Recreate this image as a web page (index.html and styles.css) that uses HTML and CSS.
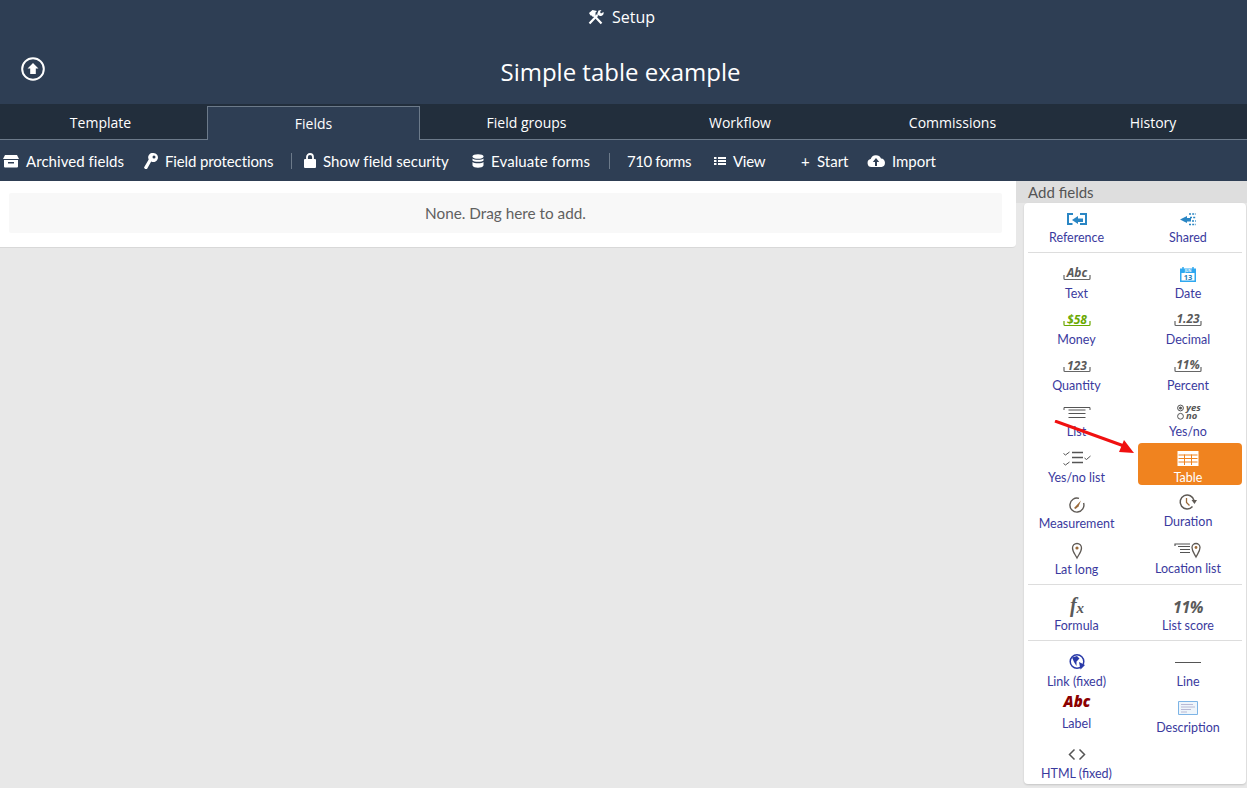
FILE: index.html
```html
<!DOCTYPE html>
<html lang="en">
<head>
<meta charset="utf-8">
<title>Setup</title>
<link rel="stylesheet" href="styles.css">
</head>
<body>
<header class="top">
  <div class="setup"><svg class="setup-ic" viewBox="0 0 16 16" width="16" height="16"><path d="M1.500 14.500 9.500 6M13.500 14.500 6 6.500" stroke="#fff" stroke-width="2.200" fill="none"/><path d="M1 4 4.500 1 9 2 7.500 3.500 7.500 6 5 8 3.500 6.500 2.500 6.500ZM10.500 1.500 13.500 1 12 3 13 4.500 15.500 3C16 5 15 7 12 7L9 5.500Z" fill="#fff"/></svg><span>Setup</span></div>
  <div class="title-row">
    <svg class="up" viewBox="0 0 24 24" width="24" height="24"><circle cx="12" cy="12" r="10.800" fill="none" stroke="#fff" stroke-width="2"/><path d="M12 6 17.500 11.500H14.800V17H9.200V11.500H6.500Z" fill="#fff"/></svg>
    <h1>Simple table example</h1>
  </div>
</header>
<nav class="tabs">
  <a class="tab t1">Template</a>
  <a class="tab active">Fields</a>
  <a class="tab t3">Field groups</a>
  <a class="tab t4">Workflow</a>
  <a class="tab t5">Commissions</a>
  <a class="tab t6">History</a>
</nav>
<div class="toolbar">
  <span class="tool w1"><svg viewBox="0 0 16 14" width="16" height="14"><path d="M2 1h12l2 4H0ZM1 6h14v6.500a1 1 0 0 1-1 1H2a1 1 0 0 1-1-1ZM5 8v1.500h6V8Z" fill="#fff" fill-rule="evenodd"/></svg>Archived fields</span>
  <span class="tool w2"><svg viewBox="0 0 14 16" width="14" height="16"><path d="M9.500 0a4.500 4.500 0 1 1-2.300 8.400L3 16H1L0 14.500 4.700 6.500A4.500 4.500 0 0 1 9.500 0Zm.5 2.500a1.500 1.500 0 1 0 0 3 1.500 1.500 0 0 0 0-3Z" fill="#fff" fill-rule="evenodd"/></svg>Field protections</span>
  <i class="sep"></i>
  <span class="tool w3"><svg viewBox="0 0 12 15" width="12" height="15"><path d="M1 6h10a1 1 0 0 1 1 1v7a1 1 0 0 1-1 1H1a1 1 0 0 1-1-1V7a1 1 0 0 1 1-1Z" fill="#fff"/><path d="M3 6.500V4a3 3 0 0 1 6 0v2.500" fill="none" stroke="#fff" stroke-width="1.800"/></svg>Show field security</span>
  <span class="tool w4"><svg viewBox="0 0 12 14" width="12" height="14"><ellipse cx="6" cy="2.500" rx="5.500" ry="2.300" fill="#fff"/><path d="M.5 4.500c1 1.800 10 1.800 11 0v2c-1 1.800-10 1.800-11 0ZM.5 8c1 1.800 10 1.800 11 0v3.500c-1 3-10 3-11 0Z" fill="#fff"/></svg>Evaluate forms</span>
  <i class="sep"></i>
  <span class="tool w5">710 forms</span>
  <span class="tool w6"><svg viewBox="0 0 12 10" width="12" height="10"><path d="M0 1h2.500v2H0ZM0 4h2.500v2H0ZM0 7h2.500v2H0ZM4 1h8v2H4ZM4 4h8v2H4ZM4 7h8v2H4Z" fill="#fff"/></svg>View</span>
  <span class="tool w7"><span class="plus">+</span>Start</span>
  <span class="tool w8"><svg viewBox="0 0 18 13" width="18" height="13"><path d="M4.500 13a4 4 0 0 1-.8-7.900A5.500 5.500 0 0 1 14 4.500 4.300 4.300 0 0 1 14.500 13Z" fill="#fff"/><path d="M9 4 5.800 8H8v4h2V8h2.200Z" fill="#2e3e54"/></svg>Import</span>
</div>
<main class="content">
  <section class="panel">
    <div class="drop">None. Drag here to add.</div>
  </section>
  <aside class="side">
    <div class="side-head">Add fields</div>
    <div class="card">
      <div class="sec">
        <div class="col">
          <div class="item"><svg viewBox="0 0 60 26" width="60" height="26"><path d="M26 11H21V21H25.500M33 11H39V21H33" fill="none" stroke="#2a86c4" stroke-width="2"/><path d="M25 17 31 13V15.500H36V19H31V21Z" fill="#2a86c4"/></svg><span>Reference</span></div>
        </div>
        <div class="col col2">
          <div class="item"><svg viewBox="0 0 60 26" width="60" height="26"><path d="M22 16.500 29 13V15H33V18.500H29V20Z" fill="#2a86c4"/><path d="M31 11h7M32 14.500h6M34 18h4M31 21.500h7" stroke="#2a86c4" stroke-width="1.500" stroke-dasharray="2 1.200"/></svg><span>Shared</span></div>
        </div>
      </div>
      <div class="sec">
        <div class="col">
          <div class="item"><svg viewBox="0 0 60 26" width="60" height="26"><use href="#bracket"/><text x="30" y="17.500" class="val">Abc</text></svg><span>Text</span></div>
          <div class="item"><svg viewBox="0 0 60 26" width="60" height="26"><use href="#bracket" class="green"/><text x="30" y="18.500" class="val money">$58</text></svg><span>Money</span></div>
          <div class="item"><svg viewBox="0 0 60 26" width="60" height="26"><use href="#bracket"/><text x="30" y="18.500" class="val">123</text></svg><span>Quantity</span></div>
          <div class="item"><svg viewBox="0 0 60 26" width="60" height="26"><path d="M17 13V10.500H43V13" fill="none" stroke="#555" stroke-width="1"/><path d="M21.500 13H38.500M21.500 16.500H38.500M21.500 20.500H38.500" stroke="#555" stroke-width="1.200"/></svg><span>List</span></div>
          <div class="item"><svg viewBox="0 0 60 26" width="60" height="26"><path d="M25 9.500H36M25 14.500H36M25 19.500H36" stroke="#555" stroke-width="1.700"/><path d="M16.500 10.500l2 1.500 4-3M16.500 20.500l2 1.500 4-3M37.500 15l2 1.500 4-3.500" fill="none" stroke="#555"/></svg><span>Yes/no list</span></div>
          <div class="item"><svg viewBox="0 0 60 26" width="60" height="26"><path d="M32 9.400A7 7 0 1 0 36.600 14" fill="none" stroke="#5f5a55" stroke-width="1.400"/><path d="M27 19 34 11.500 31.500 17.500 28.500 20Z" fill="#9a6a3a"/></svg><span>Measurement</span></div>
          <div class="item"><svg viewBox="0 0 60 26" width="60" height="26"><path d="M30 23c-2-3.800-4.500-6.500-4.500-10a4.500 4.500 0 0 1 9 0c0 3.500-2.500 6.200-4.500 10Z" fill="none" stroke="#5f5a55" stroke-width="1.300"/><circle cx="30" cy="13" r="1.600" fill="#9a6a3a"/></svg><span>Lat long</span></div>
        </div>
        <div class="col col2">
          <div class="item"><svg viewBox="0 0 60 26" width="60" height="26"><path d="M22 9.500H38V23H22Z" fill="#2fa8f0"/><path d="M25 8V11M35 8V11" stroke="#2fa8f0" stroke-width="1.500"/><path d="M23.500 14H36.500V21.500H23.500Z" fill="#fff"/><text x="30" y="13.300" class="mon">JUN</text><text x="30" y="21" class="cal">13</text></svg><span>Date</span></div>
          <div class="item"><svg viewBox="0 0 60 26" width="60" height="26"><use href="#bracket"/><text x="30" y="18" class="val">1.23</text></svg><span>Decimal</span></div>
          <div class="item"><svg viewBox="0 0 60 26" width="60" height="26"><use href="#bracket"/><text x="30" y="18" class="val">11%</text></svg><span>Percent</span></div>
          <div class="item"><svg viewBox="0 0 60 26" width="60" height="26"><circle cx="22.500" cy="11" r="2.900" fill="none" stroke="#555"/><circle cx="22.500" cy="11" r="1.500" fill="#555"/><circle cx="22.500" cy="19.300" r="2.900" fill="none" stroke="#555"/><text x="28" y="13.500" class="yn">yes</text><text x="28" y="22" class="yn">no</text></svg><span>Yes/no</span></div>
          <div class="item on mb2"><svg viewBox="0 0 60 26" width="60" height="26"><path d="M19.500 8H40.500V23H19.500Z" fill="#fff"/><path d="M20.500 12h19M20.500 15.500h19M20.500 19h19M26.500 11.500v10.500M33.500 11.500v10.500" stroke="#f0831f" stroke-width="1"/></svg><span>Table</span></div>
          <div class="item mb5"><svg viewBox="0 0 60 26" width="60" height="26"><path d="M34.500 19.500A7 7 0 1 1 36 13.500" fill="none" stroke="#5f5a55" stroke-width="1.500"/><path d="M33.500 13H39L36.500 17Z" fill="#5f5a55"/><path d="M28.500 11V15.500L31.500 18.500" fill="none" stroke="#9a6a3a" stroke-width="1.300"/></svg><span>Duration</span></div>
          <div class="item"><svg viewBox="0 0 60 26" width="60" height="26"><path d="M17 12V10H32M20 12.500H32M22 15.500H32M22 18.500H32" fill="none" stroke="#555" stroke-width="1.200"/><path d="M38 23c-2-3.800-4-6-4-9.500a4 4 0 0 1 8 0c0 3.500-2 5.700-4 9.500Z" fill="none" stroke="#5f5a55" stroke-width="1.300"/><circle cx="38" cy="13.500" r="1.400" fill="#9a6a3a"/></svg><span>Location list</span></div>
        </div>
      </div>
      <div class="sec">
        <div class="col">
          <div class="item"><svg viewBox="0 0 60 26" width="60" height="26"><text x="30" y="21" class="fx">f<tspan dy="1" class="fx-x">x</tspan></text></svg><span>Formula</span></div>
        </div>
        <div class="col col2">
          <div class="item"><svg viewBox="0 0 60 26" width="60" height="26"><text x="30" y="21.500" class="score">11%</text></svg><span>List score</span></div>
        </div>
      </div>
      <div class="sec last">
        <div class="col">
          <div class="item mb0"><svg viewBox="0 0 60 26" width="60" height="26"><circle cx="30" cy="14.500" r="6.800" fill="none" stroke="#2a3aa8" stroke-width="1.500"/><path d="M25 10.500 30 9 32.500 11.500 29.500 14.500 29.500 19 27 15ZM32 15 38 18 33.500 22.500Z" fill="#2a3aa8"/></svg><span>Link (fixed)</span></div>
          <div class="item mb8"><svg viewBox="0 0 60 26" width="60" height="26"><text x="30" y="18" class="lbl">Abc</text></svg><span>Label</span></div>
          <div class="item"><svg viewBox="0 0 60 26" width="60" height="26"><path d="M27.500 10.500 22.500 15.500 27.500 20.500M32.500 10.500 37.500 15.500 32.500 20.500" fill="none" stroke="#555" stroke-width="1.500"/></svg><span>HTML (fixed)</span></div>
        </div>
        <div class="col col2">
          <div class="item"><svg viewBox="0 0 60 26" width="60" height="26"><path d="M17 15.500H43" stroke="#555" stroke-width="1"/></svg><span>Line</span></div>
          <div class="item"><svg viewBox="0 0 60 26" width="60" height="26"><path d="M20.500 8.500H39.500V21.500H20.500Z" fill="#eef5fb" stroke="#7db4e6"/><path d="M23 11.500H35M23 14H37M23 16.500H33M23 19H29" stroke="#aac" stroke-width=".8"/></svg><span>Description</span></div>
        </div>
      </div>
    </div>
  </aside>
</main>
<svg class="arrow" viewBox="0 0 90 40" width="90" height="40"><path d="M1 1 70 26" stroke="#f01010" stroke-width="3"/><path d="M80 33 65 32 70 20Z" fill="#f01010"/></svg>
<svg class="defs" width="0" height="0"><defs><path id="bracket" d="M17 16V19.500a1 1 0 0 0 1 1H42a1 1 0 0 0 1-1V16" fill="none" stroke="currentColor" stroke-width="1.200"/></defs></svg>
</body>
</html>
```
FILE: styles.css
```css
* { box-sizing: border-box; }
html, body { height: 100%; }
body {
  margin: 0;
  width: 1247px;
  height: 788px;
  overflow: hidden;
  position: relative;
  display: flex;
  flex-direction: column;
  background: #e8e8e8;
  font-family: "Lato", "Open Sans", sans-serif;
}
.top { background: #2e3e54; height: 104px; color: #fff; font-family: "Open Sans", sans-serif; flex: none; }
.setup { height: 33px; display: flex; align-items: center; justify-content: center; gap: 8px; font-size: 16px; padding-right: 4px; padding-top: 1px; }
.title-row { position: relative; display: flex; justify-content: center; padding-top: 21px; padding-right: 6px; }
.up { position: absolute; left: 21px; top: 24px; }
h1 { margin: 0; font-size: 24px; font-weight: 400; line-height: 36px; }
.tabs { display: flex; height: 36px; flex: none; background: #222e3c; color: #fff; font-family: "Open Sans", sans-serif; font-size: 14px; border-bottom: 1px solid #6c7a8a; }
.tab { display: flex; align-items: center; justify-content: center; padding-top: 1px; }
.t1 { width: 207px; padding-right: 6px; }
.active { width: 213px; height: 36px; margin-top: 2px; background: #2e3e54; border: 1px solid #6c7a8a; border-bottom: none; padding: 0 0 2px; }
.t3 { width: 213px; }
.t4 { width: 213px; padding-left: 1px; }
.t5 { width: 213px; }
.t6 { width: 188px; }
.toolbar { height: 41px; flex: none; background: #2e3e54; color: #fff; display: flex; align-items: center; font-size: 15px; padding-left: 3px; }
.tool { display: flex; align-items: center; gap: 7px; white-space: nowrap; }
.w1 { width: 141px; letter-spacing: .05px; }
.w2 { width: 147px; letter-spacing: -.12px; }
.sep { width: 1px; height: 16px; background: #6c7a8a; margin-right: 12px; }
.w3 { width: 168px; letter-spacing: .05px; }
.w4 { width: 137px; letter-spacing: .12px; }
.w5 { width: 87px; margin-left: 5px; letter-spacing: -.4px; }
.w6 { width: 87px; letter-spacing: -.3px; }
.w7 { width: 66px; }
.w8 { letter-spacing: -.05px; }
.plus { width: 9px; }
.content { flex: 1; display: flex; align-items: flex-start; }
.panel { width: 1016px; height: 67px; background: #fff; border-radius: 0 0 4px 0; padding: 12px 14px 14px 9px; border-bottom: 1px solid #d8d8d8; }
.drop { height: 40px; background: #f8f8f8; display: flex; align-items: center; justify-content: center; color: #606060; font-size: 15.300px; border-radius: 2px; }
.side { width: 231px; height: 607px; display: flex; flex-direction: column; }
.side-head { height: 22px; background: #dedede; color: #555; font-size: 15px; padding-left: 12px; line-height: 22px; }
.card { margin-left: 8px; width: 222px; height: 581px; background: #fff; border-radius: 4px; box-shadow: 0 1px 2px rgba(0,0,0,.15); padding: 0 4px; }
.sec { display: grid; grid-template-columns: 97px 104px; column-gap: 13px; border-bottom: 1px solid #ddd; padding: 6px 0 3px; }
.sec:first-child { padding-top: 0; }
.sec.last { border: none; }
.col { display: flex; flex-direction: column; }
.item { height: 42px; margin-bottom: 4px; display: flex; flex-direction: column; align-items: center; color: #3a3a9e; font-size: 12.500px; line-height: 16px; border-radius: 4px; white-space: nowrap; }
.item span { margin-top: 1px; }
.col2 .item { padding-right: 4px; }
.item svg { flex: none; color: #666; }
.on { background: #f0831f; color: #fff; }
.mb0 { margin-bottom: 0; }
.mb2 { margin-bottom: 2px; }
.mb5 { margin-bottom: 5px; }
.mb8 { margin-bottom: 8px; }
.item svg use.green { color: #6aa800; }
.val { font: italic 700 12px "Open Sans", sans-serif; fill: #5a5a5a; text-anchor: middle; }
.val.money { fill: #6aa800; }
.cal { font: 700 7.500px "Open Sans", sans-serif; fill: #1f7dba; text-anchor: middle; }
.mon { font: 700 3.500px "Open Sans", sans-serif; fill: #fff; text-anchor: middle; }
.yn { font: italic 700 9.500px "Open Sans", sans-serif; fill: #555; }
.fx { font: italic 700 20px "Liberation Serif", serif; fill: #5a5a5a; text-anchor: middle; }
.fx-x { font-size: 15px; }
.score { font: italic 700 16px "Open Sans", sans-serif; fill: #5a5a5a; text-anchor: middle; letter-spacing: -.5px; }
.lbl { font: italic 800 15px "Open Sans", sans-serif; fill: #8b0000; text-anchor: middle; }
.arrow { position: absolute; left: 1054px; top: 420px; }
.defs { position: absolute; }
```
